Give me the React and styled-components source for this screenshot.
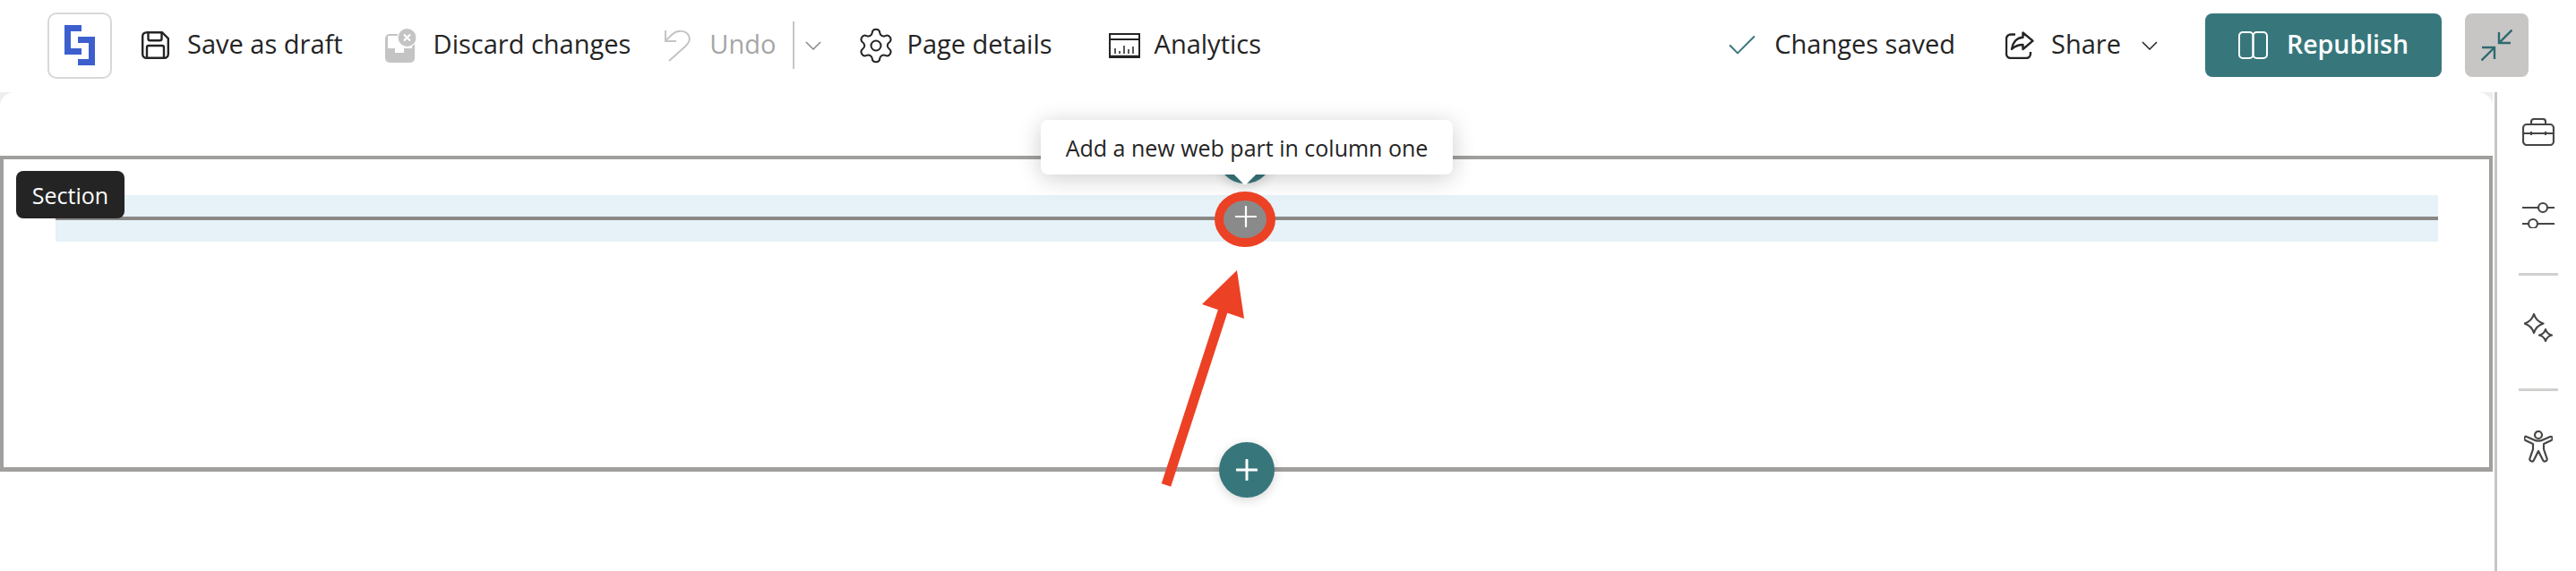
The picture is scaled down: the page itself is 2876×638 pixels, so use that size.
import React from 'react';
import styled, { createGlobalStyle } from 'styled-components';
import { Settings, Check } from 'lucide-react';

const GlobalStyle = createGlobalStyle`
  html, body { margin: 0; padding: 0; background: #fff; }
  body { font-family: "Open Sans", "Noto Sans", sans-serif; color: #242424; overflow: hidden; }
`;

const Page = styled.div`
  position: relative;
  width: 2876px;
  height: 638px;
  display: flex;
  flex-direction: column;
`;

const Toolbar = styled.div`
  height: 103px;
  flex: none;
  display: flex;
  align-items: center;
  padding: 0 53px 2px 53px;
  box-sizing: border-box;
`;

const Logo = styled.div`
  width: 72px;
  height: 74px;
  box-sizing: border-box;
  border: 2px solid #d8d8d8;
  border-radius: 10px;
  display: flex;
  align-items: center;
  justify-content: center;
  margin-right: 33px;
`;

const ToolItem = styled.div`
  display: flex;
  align-items: center;
  gap: ${p => p.$gap || 19}px;
  margin-right: ${p => p.$after || 0}px;
  font-size: 29px;
  line-height: 38px;
  white-space: nowrap;
  color: ${p => (p.$disabled ? '#a6a6a6' : '#242424')};
`;

const Label = styled.span`
  margin-bottom: 3px;
`;

const Divider = styled.div`
  width: 2px;
  height: 53px;
  background: #c8c6c4;
  margin-right: 12px;
`;

const Spacer = styled.div`
  flex: 1;
`;

const PublishButton = styled.div`
  width: 264px;
  height: 71px;
  border-radius: 8px;
  background: #37777c;
  color: #fff;
  font-size: 28.5px;
  font-weight: 600;
  display: flex;
  align-items: center;
  justify-content: center;
  gap: 21px;
  margin-right: 26px;
`;

const CollapseButton = styled.div`
  width: 71px;
  height: 71px;
  border-radius: 8px;
  background: #c8c6c4;
  display: flex;
  align-items: center;
  justify-content: center;
`;

const Body = styled.div`
  flex: 1;
  display: flex;
  min-height: 0;
`;

const CanvasWrap = styled.div`
  width: 2783px;
  flex: none;
  background: #efeeed;
`;

const Canvas = styled.div`
  height: 100%;
  box-sizing: border-box;
  background: #fff;
  border-radius: 16px 16px 0 0;
  padding-top: 71px;
`;

const Section = styled.div`
  position: relative;
  height: 353px;
  box-sizing: border-box;
  border: 4px solid #a19f9d;
  border-bottom-width: 5px;
  padding: 40px 57px 0 58px;
`;

const Band = styled.div`
  height: 52px;
  background: #e6f1f8;
  display: flex;
  align-items: center;
`;

const BandLine = styled.div`
  width: 100%;
  height: 4px;
  background: #8a8886;
`;

const SectionTag = styled.div`
  position: absolute;
  left: 14px;
  top: 13px;
  width: 121px;
  height: 53px;
  border-radius: 8px;
  background: #242424;
  color: #fff;
  font-size: 25px;
  display: flex;
  align-items: center;
  justify-content: center;
`;

const AddCircle = styled.div`
  position: absolute;
  left: ${p => (p.$bottom ? 1357 : 1355)}px;
  ${p => (p.$bottom ? 'bottom: -34px;' : 'top: -35px;')}
  width: 62px;
  height: 62px;
  border-radius: 50%;
  background: #37777c;
  box-shadow: 0 3px 12px rgba(0, 0, 0, 0.16);
  display: flex;
  align-items: center;
  justify-content: center;
`;

const ColumnAdd = styled.div`
  position: absolute;
  left: 1352px;
  top: 36px;
  width: 68px;
  height: 62px;
  box-sizing: border-box;
  border-radius: 50%;
  border: 10px solid #ec4125;
  background: #8a8a8a;
  padding: 0 0 6px 2px;
  display: flex;
  align-items: center;
  justify-content: center;
`;

const Tooltip = styled.div`
  position: absolute;
  left: 1158px;
  top: -44px;
  width: 460px;
  height: 61px;
  border-radius: 8px;
  background: #fff;
  box-shadow: 0 4px 26px rgba(0, 0, 0, 0.2);
  font-size: 25px;
  display: flex;
  align-items: center;
  justify-content: center;

  &::after {
    content: '';
    position: absolute;
    left: 218px;
    top: 49px;
    width: 20px;
    height: 20px;
    background: #fff;
    transform: rotate(45deg);
    border-radius: 2px;
  }
`;

const Rail = styled.div`
  flex: 1;
  margin-left: 2px;
  border-left: 3px solid #c8c6c4;
  display: flex;
  flex-direction: column;
  align-items: center;
  padding: 29px 0 0 4px;
`;

const RailIcon = styled.div`
  height: ${p => p.$h}px;
  display: flex;
  justify-content: center;
  margin-bottom: ${p => p.$after}px;
`;

const RailRule = styled.div`
  width: 44px;
  height: 3px;
  background: #d2d0ce;
  margin-bottom: ${p => p.$after}px;
`;

const Annotation = styled.svg`
  position: absolute;
  left: 0;
  top: 0;
  pointer-events: none;
`;

const LogoMark = () => (
  <svg width="34" height="45" viewBox="0 0 34 45" fill="none" stroke="#3d5fce" strokeWidth="7">
    <path d="M19 3.500H3.500V29.500H19" />
    <path d="M15 16.500H30.500V41.500H15" />
  </svg>
);

const SaveIcon = () => (
  <svg width="31" height="31" viewBox="0 0 31 31" fill="none" stroke="#242424" strokeWidth="2.400">
    <path d="M5 1.200h18l6.800 6.800v17.500a4.300 4.300 0 0 1-4.300 4.300h-20a4.300 4.300 0 0 1-4.300-4.300v-20a4.300 4.300 0 0 1 4.300-4.300z" />
    <path d="M7.500 1.200v7a2 2 0 0 0 2 2h11a2 2 0 0 0 2-2v-7" />
    <path d="M6 29.800V18a2 2 0 0 1 2-2h15a2 2 0 0 1 2 2v11.800" />
  </svg>
);

const DiscardIcon = () => (
  <svg width="35" height="38" viewBox="0 0 35 38">
    <rect x="0" y="6" width="33" height="32" rx="5" fill="#c4c4c4" />
    <path d="M3 8h27v14h-9v5H11v-5H3z" fill="#fff" />
    <circle cx="24.500" cy="10" r="11" fill="#fff" />
    <circle cx="24.500" cy="10" r="10" fill="#c4c4c4" />
    <path d="M21 6.500l7 7M28 6.500l-7 7" stroke="#fff" strokeWidth="2.200" />
  </svg>
);

const UndoIcon = () => (
  <svg width="31" height="36" viewBox="0 0 31 36" fill="none" stroke="#c4c4c4" strokeWidth="2">
    <path d="M2 1v12h12" />
    <path d="M2 12.500L10 5c6-5 15-4 18 2 2 5 0 8-4 12L6 35" />
  </svg>
);

const AnalyticsIcon = () => (
  <svg width="35" height="28" viewBox="0 0 35 28" fill="none" stroke="#242424" strokeWidth="2">
    <rect x="1" y="1" width="33" height="26" />
    <path d="M1 7h33" />
    <path d="M1 26h33" strokeWidth="2.500" />
    <path d="M7 23v-6M12 23v-3M17 23v-9M22 23v-5M27 23v-8" strokeWidth="1.500" />
  </svg>
);

const ShareIcon = () => (
  <svg width="32" height="31" viewBox="0 0 32 31" fill="none" stroke="#242424" strokeWidth="2.400" strokeLinejoin="round">
    <path d="M11 3.500H6a5 5 0 0 0-5 5V25a5 5 0 0 0 5 5h17a5 5 0 0 0 5-5v-2" />
    <path d="M19.500 1.500L30.500 10.700L19.500 20V15C14 15 10 17 7 20C8 13 12 7 19.500 6.700z" />
  </svg>
);

const BookIcon = () => (
  <svg width="33" height="31" viewBox="0 0 33 31" fill="none" stroke="#fff" strokeWidth="2">
    <rect x="1" y="1" width="15.500" height="29" rx="4" />
    <rect x="16.500" y="1" width="15.500" height="29" rx="4" />
  </svg>
);

const CollapseIcon = () => (
  <svg width="35" height="35" viewBox="0 0 35 35" fill="none" stroke="#2e6a70" strokeWidth="2.400">
    <path d="M34.500 .5L20 15M20 3V15H33" />
    <path d="M.5 34.500L15 20M1 20H15V33" />
  </svg>
);

const Chevron = styled.svg`
  margin-left: ${p => p.$shift || 0}px;
  stroke: ${p => (p.$shift ? '#242424' : '#8a8886')};
`;

const ChevronIcon = ({ shift }) => (
  <Chevron $shift={shift} width="18" height="10" viewBox="0 0 18 10" fill="none" strokeWidth="1.500">
    <path d="M1 1l8 8 8-8" />
  </Chevron>
);

const PlusIcon = ({ size, weight }) => (
  <svg width={size} height={size} viewBox="0 0 24 24" stroke="#fff" strokeWidth={weight} strokeLinecap="round">
    <path d="M12 1v22M1 12h22" />
  </svg>
);

const BriefcaseIcon = () => (
  <svg width="36" height="31" viewBox="0 0 36 31" fill="none" stroke="#484644" strokeWidth="2.200">
    <rect x="1" y="7" width="34" height="23" rx="4" />
    <path d="M10 7V4a3 3 0 0 1 3-3h10a3 3 0 0 1 3 3v3" />
    <path d="M1 17h34M10 15v4M26 15v4" />
  </svg>
);

const SlidersIcon = () => (
  <svg width="36" height="30" viewBox="0 0 36 30" fill="none" stroke="#484644" strokeWidth="2.200">
    <path d="M0 7h18M28 7h8M0 25h7M17 25h19" />
    <circle cx="23" cy="7" r="5" />
    <circle cx="12" cy="25" r="5" />
  </svg>
);

const SparkleIcon = () => (
  <svg width="32" height="32" viewBox="0 0 32 32" fill="none" stroke="#484644" strokeWidth="2.200" strokeLinejoin="round">
    <path d="M11 1Q13.500 9 21.500 11.500Q13.500 14 11 22Q8.500 14 .5 11.500Q8.500 9 11 1z" />
    <path d="M24 18Q25.500 23 31 24.500Q25.500 26 24 31Q22.500 26 17 24.500Q22.500 23 24 18z" />
  </svg>
);

const PersonIcon = () => (
  <svg width="32" height="36" viewBox="0 0 32 36" fill="none" stroke="#484644" strokeWidth="2.200" strokeLinejoin="round">
    <circle cx="16" cy="5" r="4" />
    <path d="M3 7l8 3.500a12 12 0 0 0 10 0L29 7c2-1 4 2 1.500 4L22 15v6l3.500 10c1 3-3 5-4.500 2L16 23l-5 10c-1.500 3-5.500 1-4.500-2L10 21v-6l-8.500-4C-1 9 1 6 3 7z" />
  </svg>
);

export default function App() {
  return (
    <Page>
      <GlobalStyle />
      <Toolbar>
        <Logo><LogoMark /></Logo>
        <ToolItem $after={47} $gap={20}><SaveIcon /><Label>Save as draft</Label></ToolItem>
        <ToolItem $after={37}><DiscardIcon /><Label>Discard changes</Label></ToolItem>
        <ToolItem $disabled $after={19} $gap={20}><UndoIcon /><Label>Undo</Label></ToolItem>
        <Divider />
        <ToolItem $after={39}><ChevronIcon /></ToolItem>
        <ToolItem $after={63} $gap={12}><Settings size={44} strokeWidth={1.1} /><Label>Page details</Label></ToolItem>
        <ToolItem $gap={16}><AnalyticsIcon /><Label>Analytics</Label></ToolItem>
        <Spacer />
        <ToolItem $after={56} $gap={16}><Check size={40} strokeWidth={1.2} color="#37777c" /><Label>Changes saved</Label></ToolItem>
        <ToolItem $after={53}><ShareIcon /><Label>Share</Label><ChevronIcon shift={4} /></ToolItem>
        <PublishButton><BookIcon /><Label>Republish</Label></PublishButton>
        <CollapseButton><CollapseIcon /></CollapseButton>
      </Toolbar>
      <Body>
        <CanvasWrap>
          <Canvas>
            <Section>
              <Band><BandLine /></Band>
              <SectionTag>Section</SectionTag>
              <AddCircle />
              <Tooltip>Add a new web part in column one</Tooltip>
              <ColumnAdd><PlusIcon size={24} weight={2.2} /></ColumnAdd>
              <AddCircle $bottom><PlusIcon size={24} weight={3} /></AddCircle>
            </Section>
          </Canvas>
        </CanvasWrap>
        <Rail>
          <RailIcon $h={31} $after={62}><BriefcaseIcon /></RailIcon>
          <RailIcon $h={30} $after={50}><SlidersIcon /></RailIcon>
          <RailRule $after={42} />
          <RailIcon $h={32} $after={52}><SparkleIcon /></RailIcon>
          <RailRule $after={44} />
          <RailIcon $h={36} $after={0}><PersonIcon /></RailIcon>
        </Rail>
      </Body>
      <Annotation width="2876" height="638" viewBox="0 0 2876 638">
        <path d="M1302 542L1366 345" stroke="#ec4125" strokeWidth="11" />
        <path d="M1381 302L1342 340L1389 356z" fill="#ec4125" />
      </Annotation>
    </Page>
  );
}
